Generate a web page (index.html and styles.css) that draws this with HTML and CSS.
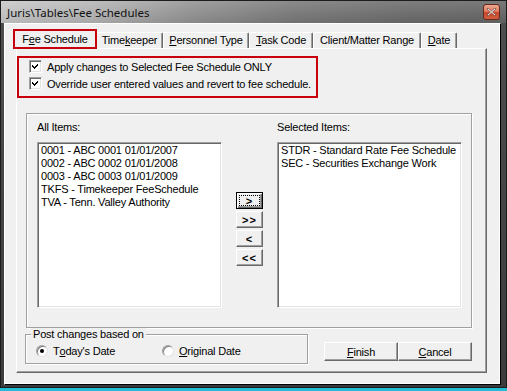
FILE: index.html
```html
<!DOCTYPE html>
<html lang="en">
<head>
    <meta charset="UTF-8">
    <title>Juris\Tables\Fee Schedules</title>
    <link rel="stylesheet" href="styles.css">
</head>
<body>

    <div class="window">
        <!-- Titelleiste -->
        <div class="titlebar">
            <span class="title">Juris\Tables\Fee Schedules</span>
            <span class="close">
                <svg width="9" height="8" viewBox="0 0 9 8">
                    <path d="M1 0 L4.5 3 L8 0 L9 1 L5.5 4 L9 7 L8 8 L4.5 5 L1 8 L0 7 L3.5 4 L0 1 Z" fill="#fff" stroke="#5a2414" stroke-width="0.6"/>
                </svg>
            </span>
        </div>

        <div class="client">
            <!-- Reiter -->
            <div class="tabs">
                <div class="tab active w-fee">F<u>e</u>e Schedule</div>
                <div class="tab w-tk">Time<u>k</u>eeper</div>
                <div class="tab w-pt"><u>P</u>ersonnel Type</div>
                <div class="tab w-tc"><u>T</u>ask Code</div>
                <div class="tab w-cm">Client/Matter Range</div>
                <div class="tab w-date"><u>D</u>ate</div>
            </div>

            <div class="panel">
                <div class="options">
                    <label class="check-row">
                        <span class="checkbox"><svg width="9" height="9" viewBox="0 0 9 9"><polygon points="1,3 1,5 3,7 7,3 7,1 3,5" fill="#000" shape-rendering="crispEdges"/></svg></span>
                        Apply changes to Selected Fee Schedule ONLY
                    </label>
                    <label class="check-row">
                        <span class="checkbox"><svg width="9" height="9" viewBox="0 0 9 9"><polygon points="1,3 1,5 3,7 7,3 7,1 3,5" fill="#000" shape-rendering="crispEdges"/></svg></span>
                        Override user entered values and revert to fee schedule.
                    </label>
                </div>

                <div class="items">
                    <div class="col">
                        <div class="col-label">All Items:</div>
                        <div class="listbox">
                            <div>0001 - ABC 0001 01/01/2007</div>
                            <div>0002 - ABC 0002 01/01/2008</div>
                            <div>0003 - ABC 0003 01/01/2009</div>
                            <div>TKFS - Timekeeper FeeSchedule</div>
                            <div>TVA - Tenn. Valley Authority</div>
                        </div>
                    </div>

                    <div class="movers">
                        <button class="btn default"><span class="focus">&gt;</span></button>
                        <button class="btn">&gt;&gt;</button>
                        <button class="btn">&lt;</button>
                        <button class="btn">&lt;&lt;</button>
                    </div>

                    <div class="col">
                        <div class="col-label">Selected Items:</div>
                        <div class="listbox">
                            <div>STDR - Standard Rate Fee Schedule</div>
                            <div>SEC - Securities Exchange Work</div>
                        </div>
                    </div>
                </div>

                <div class="bottom">
                    <fieldset class="post">
                        <legend>Post changes based on</legend>
                        <div class="radio-row">
                            <label class="option first"><span class="radio checked"></span>T<u>o</u>day's Date</label>
                            <label class="option"><span class="radio"></span><u>O</u>riginal Date</label>
                        </div>
                    </fieldset>

                    <div class="actions">
                        <button class="push"><u>F</u>inish</button>
                        <button class="push"><u>C</u>ancel</button>
                    </div>
                </div>
            </div>
        </div>
    </div>

</body>
</html>
```

FILE: styles.css
```css
* {
    box-sizing: border-box;
}

body {
    margin: 0;
    background-color: #22bdd4;
    font-family: "Liberation Sans", Arial, sans-serif;
    font-size: 11px;
    letter-spacing: -0.2px;
    color: #000;
}

/* Fensterrahmen */
.window {
    width: 507px;
    height: 388px;
    background: linear-gradient(#4e4e4e, #3b3b3b);
    border: 1px solid #1c1c1c;
    padding: 0 5px 2px 3px;
    display: flex;
    flex-direction: column;
}

.titlebar {
    height: 22px;
    margin: 0 -5px 0 -3px;
    padding-left: 6px;
    display: flex;
    align-items: center;
    background:
        linear-gradient(rgba(255, 255, 255, 0.12), rgba(0, 0, 0, 0.08)),
        linear-gradient(to right, #c9c9c9 0%, #b6b6b6 18%, #939393 38%, #7a7a7a 58%, #6c6c6c 80%, #666 100%);
}

.title {
    font-family: "Noto Sans", sans-serif;
    font-size: 11.5px;
    letter-spacing: 0;
    color: #111;
}

.close {
    margin-left: auto;
    margin-right: 6px;
    width: 17px;
    height: 16px;
    border: 1px solid #6a2a1a;
    border-radius: 3px;
    background: linear-gradient(#eba792 0%, #de7d62 45%, #c5452a 55%, #d0603f 100%);
    display: flex;
    align-items: center;
    justify-content: center;
}

.client {
    height: 362px;
    background-color: #f0f0f0;
    border: 1px solid;
    border-color: #fff #000 #000 #fff;
    box-shadow: inset -1px -1px 0 #fff;
    padding: 5px 0 0 11px;
}

/* Reiter */
.tabs {
    display: flex;
    align-items: flex-end;
    height: 19px;
}

.tab {
    height: 16px;
    border: 1px solid;
    border-bottom: 0;
    border-color: #fff #696969 transparent #fff;
    border-radius: 2px 2px 0 0;
    box-shadow: inset -1px 0 0 #a0a0a0;
    text-align: center;
    line-height: 15px;
    white-space: nowrap;
}

.w-fee { width: 80px; }
.w-tk { width: 67px; }
.w-pt { width: 86px; }
.w-tc { width: 64px; }
.w-cm { width: 108px; }
.w-date { width: 36px; }

.tab.active {
    width: 84px;
    height: 20px;
    margin: 0 -1px -1px -3px;
    border: 2px solid #c8000c;
    border-radius: 0;
    box-shadow: none;
    background-color: #f0f0f0;
    position: relative;
    z-index: 1;
    padding-top: 1px;
    line-height: 15px;
}

.panel {
    width: 471px;
    height: 325px;
    border: 1px solid;
    border-color: #fff #696969 #696969 #fff;
    box-shadow: inset -1px -1px 0 #a0a0a0;
    padding-top: 7px;
}

/* Checkboxen mit rotem Rahmen */
.options {
    width: 301px;
    height: 42px;
    border: 2px solid #c8000c;
    padding-left: 10px;
}

.check-row {
    display: flex;
    align-items: center;
    height: 17px;
    white-space: nowrap;
}

.checkbox {
    width: 13px;
    height: 13px;
    margin-right: 5px;
    background-color: #fff;
    border: 1px solid;
    border-color: #a0a0a0 #fff #fff #a0a0a0;
    box-shadow: inset 1px 1px 0 #696969, inset -1px -1px 0 #e3e3e3;
    padding: 1px 0 0 1px;
    display: flex;
}

/* Auswahllisten */
.items {
    width: 446px;
    height: 215px;
    margin: 15px 0 0 9px;
    border: 1px solid #a0a0a0;
    box-shadow: inset 1px 1px 0 #fff, 1px 1px 0 #fff;
    padding: 7px 0 0 10px;
    display: flex;
}

.col {
    width: 185px;
}

.col-label {
    line-height: 13px;
}

.listbox {
    height: 166px;
    margin-top: 8px;
    background-color: #fff;
    border: 1px solid;
    border-color: #a0a0a0 #fff #fff #a0a0a0;
    box-shadow: inset 1px 1px 0 #696969, inset -1px -1px 0 #e3e3e3;
    padding: 1px 3px;
    line-height: 13px;
    white-space: nowrap;
}

.movers {
    width: 27px;
    margin: 71px 14px 0;
    display: flex;
    flex-direction: column;
    gap: 2px;
}

.btn,
.push {
    font-family: "Liberation Sans", Arial, sans-serif;
    font-size: 11px;
    letter-spacing: -0.2px;
    color: #000;
    background-color: #f0f0f0;
    border: 1px solid;
    border-color: #fff #696969 #696969 #fff;
    box-shadow: inset -1px -1px 0 #a0a0a0;
    padding: 0;
    margin: 0;
}

.btn {
    height: 17px;
    font-weight: bold;
    line-height: 14px;
    letter-spacing: 1px;
}

.btn.default {
    border-color: #000;
    box-shadow: inset 1px 1px 0 #fff, inset -1px -1px 0 #696969, inset -2px -2px 0 #a0a0a0;
    padding: 2px;
}

.focus {
    display: block;
    height: 11px;
    line-height: 10px;
    border: 1px dotted #000;
}

/* Untere Zeile */
.bottom {
    display: flex;
    margin-left: 8px;
}

.post {
    width: 283px;
    height: 36px;
    margin: 0;
    padding: 0;
    min-width: 0;
    border: 1px solid #a0a0a0;
    box-shadow: inset 1px 1px 0 #fff, 1px 1px 0 #fff;
}

.post legend {
    margin-left: 5px;
    padding: 0 2px;
    line-height: 13px;
    background-color: #f0f0f0;
}

.radio-row {
    display: flex;
    align-items: center;
    height: 20px;
    padding-left: 10px;
}

.option {
    display: flex;
    align-items: center;
}

.option.first {
    width: 126px;
}

.radio {
    width: 12px;
    height: 12px;
    margin-right: 5px;
    border-radius: 50%;
    background-color: #fff;
    border: 1px solid;
    border-color: #a0a0a0 #e3e3e3 #e3e3e3 #a0a0a0;
    box-shadow: inset 1px 1px 0 #808080;
    display: flex;
    align-items: center;
    justify-content: center;
}

.radio.checked::after {
    content: "";
    width: 4px;
    height: 4px;
    border-radius: 50%;
    background-color: #000;
}

.actions {
    display: flex;
    margin: 14px 0 0 16px;
}

.push {
    width: 74px;
    height: 19px;
    line-height: 16px;
}
```
